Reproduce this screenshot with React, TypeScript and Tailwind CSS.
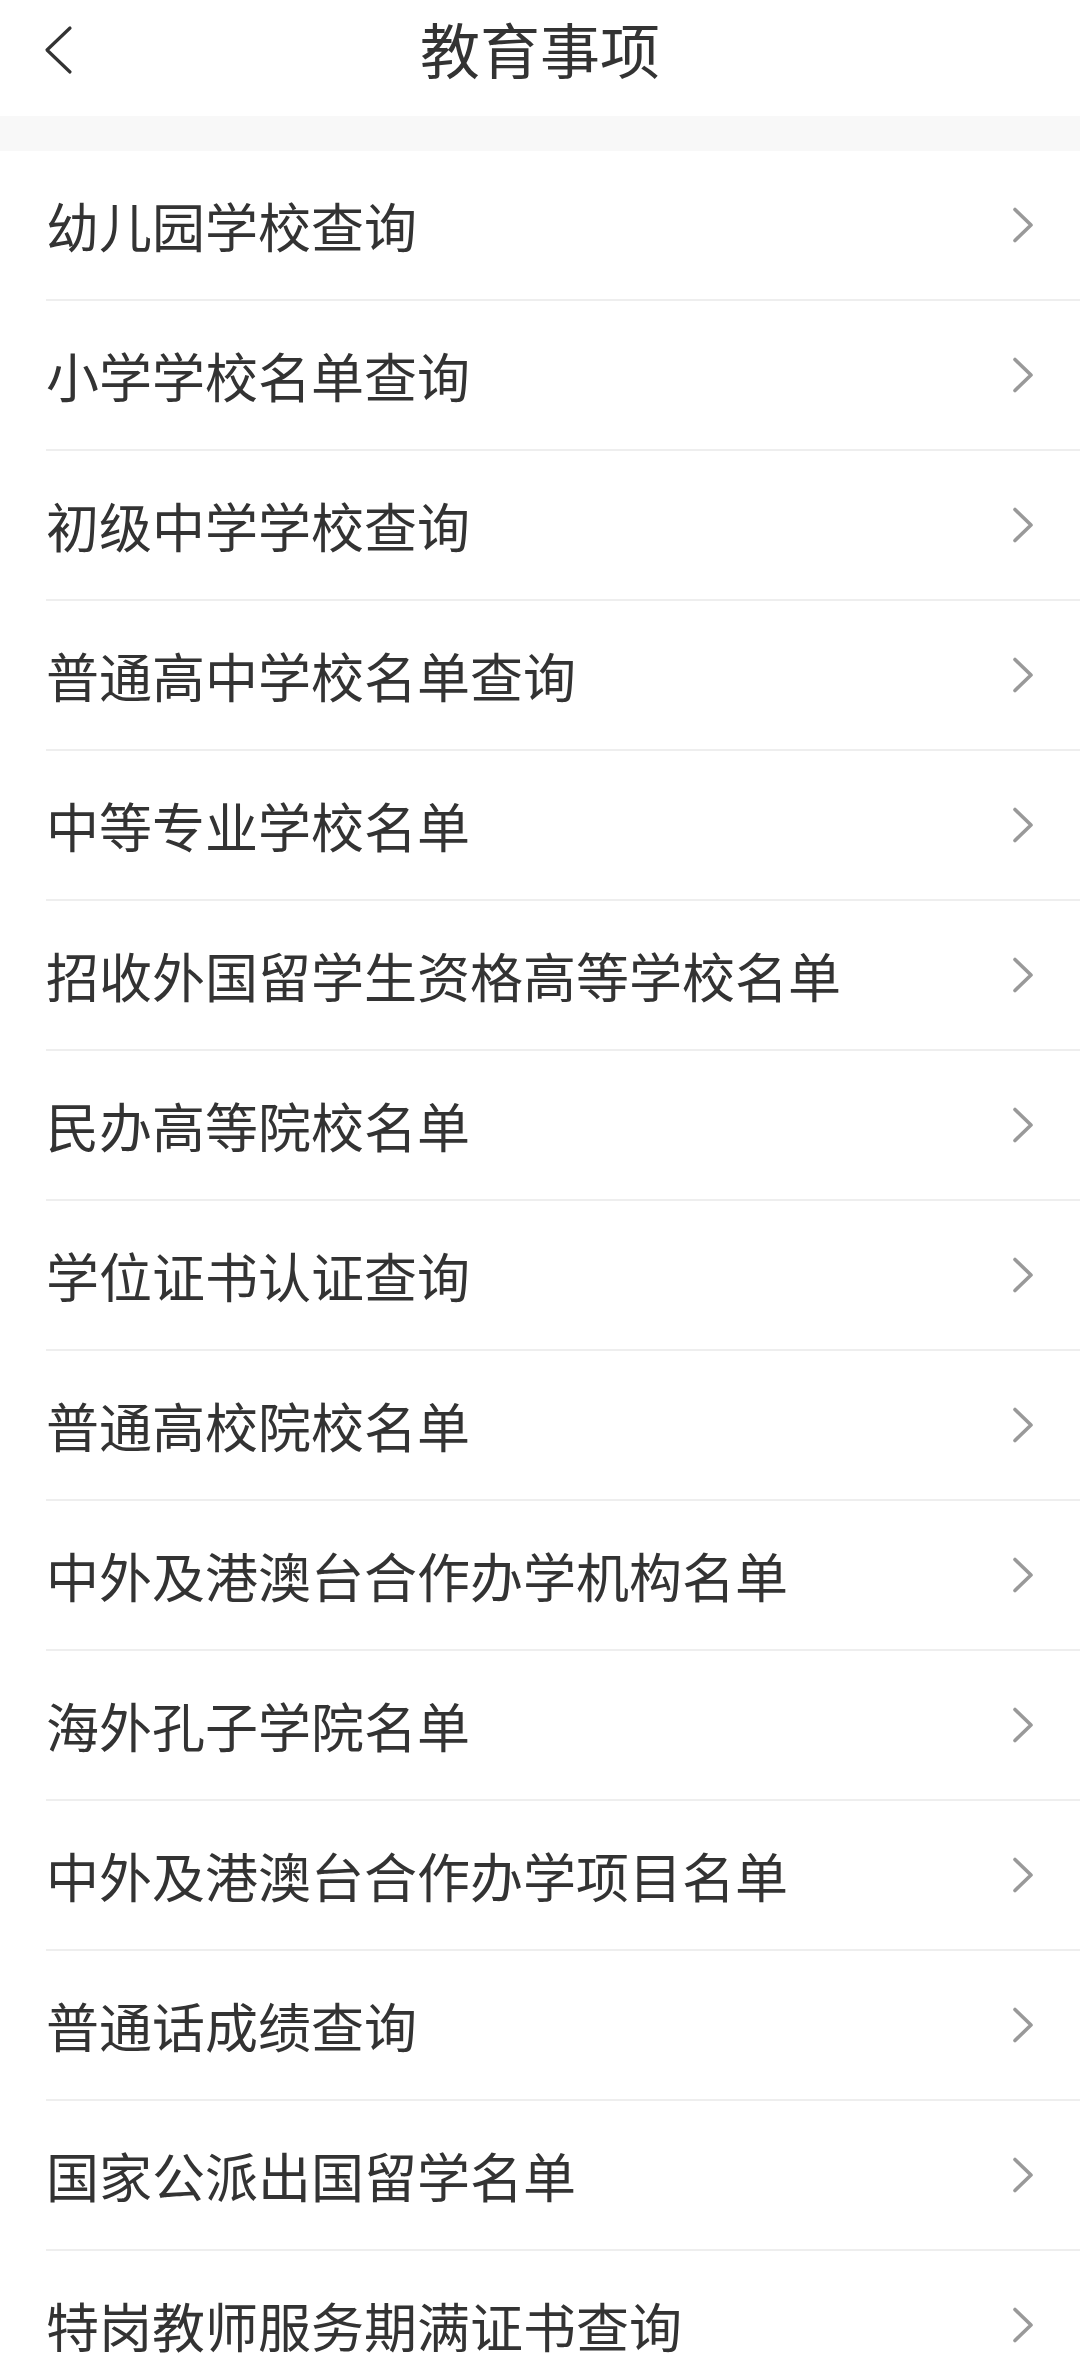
import React from 'react';

const items = [
  '幼儿园学校查询',
  '小学学校名单查询',
  '初级中学学校查询',
  '普通高中学校名单查询',
  '中等专业学校名单',
  '招收外国留学生资格高等学校名单',
  '民办高等院校名单',
  '学位证书认证查询',
  '普通高校院校名单',
  '中外及港澳台合作办学机构名单',
  '海外孔子学院名单',
  '中外及港澳台合作办学项目名单',
  '普通话成绩查询',
  '国家公派出国留学名单',
  '特岗教师服务期满证书查询',
];

const Chevron = () => (
  <svg width="22" height="36" viewBox="0 0 22 36" fill="none">
    <polyline
      points="3,2.5 19,18 3,33.5"
      stroke="#999999"
      strokeWidth="3.6"
      strokeLinecap="round"
      strokeLinejoin="round"
    />
  </svg>
);

const BackArrow = () => (
  <svg width="30" height="50" viewBox="0 0 30 50" fill="none">
    <polyline
      points="26,3 3,25 26,47"
      stroke="#333333"
      strokeWidth="3.2"
      strokeLinecap="round"
      strokeLinejoin="round"
    />
  </svg>
);

export default function App() {
  return (
    <div
      className="w-[1080px] h-[2376px] overflow-hidden bg-white"
      style={{ fontFamily: '"Noto Sans CJK SC", "Noto Sans", sans-serif' }}
    >
      {/* header */}
      <div className="relative h-[116px] flex items-center justify-center">
        <div className="absolute left-[44px] top-[25px]">
          <BackArrow />
        </div>
        <h1 className="text-[60px] leading-none text-[#333333] -mt-[20px]">教育事项</h1>
      </div>

      <div className="h-[35px] bg-[#f8f8f8]" />

      {/* list */}
      <div>
        {items.map((label) => (
          <div
            key={label}
            className="ml-[46px] h-[150px] border-b-2 border-[#eeeeee] flex items-center justify-between pr-[46px]"
          >
            <span className="text-[53px] leading-none text-[#333333]">{label}</span>
            <Chevron />
          </div>
        ))}
      </div>
    </div>
  );
}
